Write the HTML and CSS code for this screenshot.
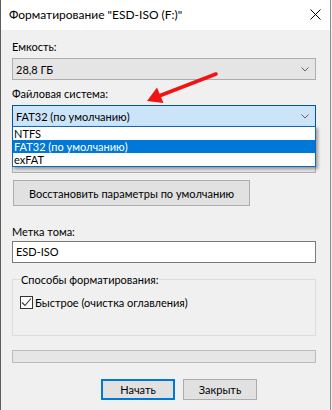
FILE: index.html
```html
<!DOCTYPE html>
<html lang="ru">
<head>
<meta charset="utf-8">
<link rel="stylesheet" href="styles.css">
</head>
<body>
<div class="window">
  <div class="titlebar">
    <span class="title">Форматирование "ESD-ISO (F:)"</span>
    <svg class="close" width="11" height="11" viewBox="0 0 11 11"><path d="M0.5 0.5L10.5 10.5M10.5 0.5L0.5 10.5" stroke="#000" stroke-width="1" fill="none"/></svg>
  </div>
  <div class="content">
    <div class="label l-cap">Емкость:</div>
    <div class="combo"><span>28,8 ГБ</span><svg class="chev" width="8" height="5" viewBox="0 0 8 5"><path d="M0.5 0.5L4 4L7.5 0.5" stroke="#606060" fill="none"/></svg></div>
    <div class="label l-fs">Файловая система:</div>
    <div class="fs-wrap">
      <div class="combo active"><span>FAT32 (по умолчанию)</span><svg class="chev" width="8" height="5" viewBox="0 0 8 5"><path d="M0.5 0.5L4 4L7.5 0.5" stroke="#606060" fill="none"/></svg></div>
      <ul class="dropdown">
        <li>NTFS</li>
        <li class="sel">FAT32 (по умолчанию)</li>
        <li>exFAT</li>
      </ul>
    </div>
    <div class="label l-cl"></div>
    <div class="combo hidden-combo"></div>
    <button class="btn restore">Восстановить параметры по умолчанию</button>
    <div class="label l-vol">Метка тома:</div>
    <div class="textbox">ESD-ISO</div>
    <fieldset class="group">
      <legend>Способы форматирования:</legend>
      <label class="check"><span class="box"><svg width="11" height="11" viewBox="0 0 11 11"><path d="M1 5.5L4 8.5L10 1.5" stroke="#333" stroke-width="1.1" fill="none"/></svg></span>Быстрое (очистка оглавления)</label>
    </fieldset>
    <div class="progress"></div>
    <div class="buttons">
      <button class="btn primary">Начать</button>
      <button class="btn">Закрыть</button>
    </div>
  </div>
  <svg class="arrow" width="85" height="42" viewBox="0 0 85 42">
    <path d="M76 8L19 30" stroke="#f01414" stroke-width="3.6" stroke-linecap="round" fill="none"/>
    <path d="M7 35L23.5 37L17 21.5Z" fill="#f01414"/>
  </svg>
</div>
</body>
</html>
```

FILE: styles.css
```css
* { box-sizing: border-box; }
html, body { margin: 0; padding: 0; }
body {
  background: #f0f0f0;
  font-family: Lato, Roboto, sans-serif;
  font-size: 11px;
  color: #000;
  width: 332px;
  height: 410px;
  overflow: hidden;
}
.window {
  position: relative;
  width: 331px;
  height: 410px;
  border-left: 1px solid #5c5c5c;
  border-right: 1px solid #8c8c8c;
  background: #f0f0f0;
}
.titlebar {
  height: 30px;
  background: #fff;
  display: flex;
  align-items: center;
  justify-content: space-between;
  padding: 0 9px 1px 8px;
}
.title { font-size: 12px; line-height: 15px; }
.close { display: block; }
.content {
  padding: 0 14px 0 11px;
}
.label { line-height: 15px; height: 15px; white-space: nowrap; }
.l-cap { margin-top: 9px; }
.l-fs { margin-top: 6px; }
.l-cl { margin-top: 5px; }
.l-vol { margin-top: 18px; }
.combo {
  height: 22px;
  border: 1px solid #adadad;
  background: #e5e5e5;
  display: flex;
  align-items: center;
  justify-content: space-between;
  padding: 0 6px 0 3px;
  line-height: 15px;
  margin-top: 4px;
}
.combo.active {
  background: #cce4f7;
  border-color: #005499;
}
.chev { display: block; }
.fs-wrap { position: relative; margin-top: 4px; }
.fs-wrap .combo { margin-top: 0; }
.dropdown {
  position: absolute;
  left: 0;
  right: 0;
  top: 21px;
  margin: 0;
  padding: 0;
  list-style: none;
  background: #fff;
  border: 1px solid #0f66c0;
  box-shadow: 2px 2px 3px rgba(0,0,0,0.35);
  z-index: 2;
}
.dropdown li {
  height: 13px;
  line-height: 13px;
  padding-left: 1px;
  white-space: nowrap;
}
.dropdown li.sel { background: #0078d7; color: #fff; }
.btn {
  font-family: inherit;
  font-size: 11px;
  color: #000;
  background: #e1e1e1;
  border: 1px solid #adadad;
  border-radius: 0;
  padding: 0;
  margin: 0;
  line-height: 15px;
  white-space: nowrap;
}
.restore {
  display: block;
  width: 237px;
  height: 26px;
  margin: 7px 0 0 1px;
}
.textbox {
  height: 22px;
  margin-top: 2px;
  background: #fff;
  border: 1px solid #7a7a7a;
  padding-left: 3px;
  line-height: 20px;
}
.group {
  margin: 9px 0 0 0;
  padding: 8px 0 0 7px;
  border: 1px solid #dcdcdc;
  height: 64px;
  min-width: 0;
}
.group legend {
  padding: 0 1px;
  margin-left: 0;
  line-height: 15px;
}
.check {
  display: flex;
  align-items: center;
  line-height: 15px;
}
.box {
  width: 13px;
  height: 13px;
  border: 1px solid #333;
  background: #fff;
  display: flex;
  align-items: center;
  justify-content: center;
  margin-right: 2px;
}
.box svg { display: block; }
.progress {
  height: 13px;
  margin-top: 14px;
  background: #e6e6e6;
  border: 1px solid #bcbcbc;
}
.buttons {
  display: flex;
  gap: 8px;
  padding-left: 89px;
  margin-top: 16px;
}
.buttons .btn {
  width: 74px;
  height: 21px;
}
.buttons .primary {
  border: 2px solid #0078d7;
}
.arrow {
  position: absolute;
  left: 139px;
  top: 66px;
  z-index: 3;
}
```
